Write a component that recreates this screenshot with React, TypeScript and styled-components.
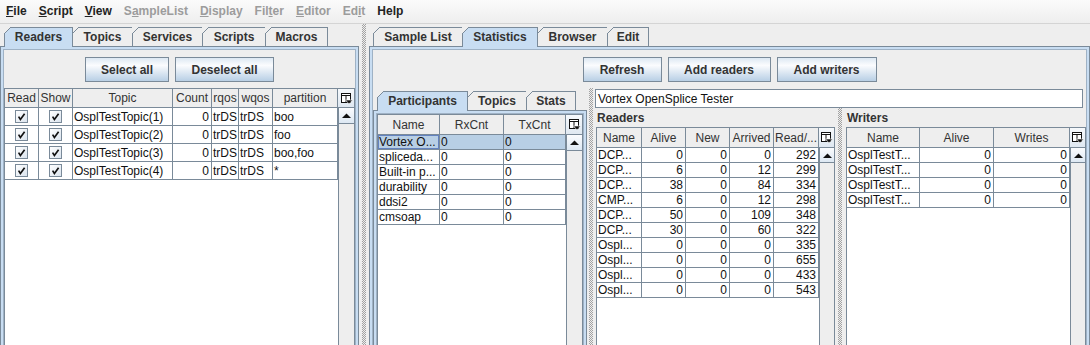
import React from "react";
import styled, { createGlobalStyle } from "styled-components";

const LINE = "#7a8a99";
const TAB_BLUE = "#c8ddf2";
const SELECTION = "#b8cfe5";
const FACE = "#eeeeee";

const GlobalStyle = createGlobalStyle`
  * { box-sizing: border-box; }
  html, body { margin: 0; padding: 0; background: ${FACE}; }
  body {
    font-family: "Liberation Sans", Arial, sans-serif;
    font-size: 12px;
    color: #111;
  }
`;

const Page = styled.div`
  width: 1090px;
  height: 345px;
  overflow: hidden;
  background: ${FACE};
  display: flex;
  flex-direction: column;
`;

/* ---------- menu bar ---------- */

const MenuBar = styled.div`
  flex: none;
  height: 24px;
  display: flex;
  align-items: center;
  padding-bottom: 1px;
  background: linear-gradient(#fbfbfb, #eeeeee);
  border-bottom: 1px solid #d4d4d4;
`;

const MenuItem = styled.span<{ $disabled?: boolean }>`
  padding: 0 6px;
  font-weight: bold;
  font-size: 12px;
  color: ${(p) => (p.$disabled ? "#9c9c9c" : "#222")};
  white-space: nowrap;
`;

/* ---------- split panes ---------- */

const Workspace = styled.div`
  flex: none;
  height: 340px;
  display: flex;
`;

const SplitDivider = styled.div<{ $w: number }>`
  flex: none;
  width: ${(p) => p.$w}px;
  display: flex;
  justify-content: center;
  &::after {
    content: "";
    width: 4px;
    background-image: conic-gradient(#a2a2a2 25%, transparent 0 50%, #a2a2a2 0 75%, transparent 0);
    background-size: 2px 2px;
  }
`;

/* ---------- tabbed panes ---------- */

const TabbedPane = styled.div<{ $w?: number }>`
  display: flex;
  flex-direction: column;
  ${(p) => (p.$w ? `flex: none; width: ${p.$w}px;` : "flex: 1; min-width: 0;")}
`;

const TabStrip = styled.div<{ $top: number }>`
  flex: none;
  display: flex;
  align-items: flex-start;
  height: ${(p) => 19 + p.$top}px;
  padding: ${(p) => p.$top}px 0 0 4px;
`;

const Tab = styled.div<{ $w: number; $selected?: boolean }>`
  position: relative;
  z-index: ${(p) => (p.$selected ? 2 : 1)};
  flex: none;
  width: ${(p) => p.$w}px;
  height: ${(p) => (p.$selected ? 20 : 19)}px;
  margin-right: -1px;
  margin-bottom: ${(p) => (p.$selected ? -1 : 0)}px;
  padding-bottom: ${(p) => (p.$selected ? 1 : 0)}px;
  border: 1px solid ${LINE};
  border-bottom: none;
  background: ${(p) => (p.$selected ? TAB_BLUE : FACE)};
  display: flex;
  align-items: center;
  justify-content: center;
  font-weight: bold;
  font-size: 12px;
  color: #333;
  white-space: nowrap;
  &::before {
    content: "";
    position: absolute;
    left: -1px;
    top: -1px;
    width: 7px;
    height: 7px;
    background: linear-gradient(
      to bottom right,
      ${FACE} 0 calc(50% - 0.6px),
      ${LINE} calc(50% - 0.6px) calc(50% + 0.6px),
      transparent calc(50% + 0.6px)
    );
  }
`;

const TabContent = styled.div`
  flex: 1;
  min-height: 0;
  display: flex;
  flex-direction: column;
  border: 1px solid ${LINE};
  background: ${TAB_BLUE};
  padding: 2px;
`;

const ContentPanel = styled.div`
  flex: 1;
  min-height: 0;
  display: flex;
  flex-direction: column;
  border: 1px solid #9fb2c5;
  background: ${FACE};
`;

/* ---------- buttons ---------- */

const ButtonRow = styled.div`
  flex: none;
  display: flex;
  justify-content: center;
  gap: 6px;
  padding-top: 7px;
`;

const Button = styled.button<{ $w: number }>`
  width: ${(p) => p.$w}px;
  height: 25px;
  padding: 0;
  border: 1px solid ${LINE};
  background: linear-gradient(#dde8f3 0%, #fbfcfe 32%, #b8cfe5 100%);
  font-family: inherit;
  font-weight: bold;
  font-size: 12px;
  color: #333;
`;

/* ---------- tables ---------- */

const ScrollPane = styled.div<{ $top?: number }>`
  flex: 1;
  min-height: 0;
  margin-top: ${(p) => p.$top ?? 0}px;
  display: flex;
  flex-direction: column;
  border: 1px solid ${LINE};
  background: #fff;
  overflow: hidden;
`;

const HeaderRow = styled.div<{ $template: string; $h: number }>`
  flex: none;
  display: grid;
  grid-template-columns: ${(p) => p.$template};
  height: ${(p) => p.$h}px;
  background: ${FACE};
  border-bottom: 1px solid ${LINE};
`;

const HeaderCell = styled.div`
  display: flex;
  align-items: center;
  justify-content: center;
  overflow: hidden;
  white-space: nowrap;
  border-right: 1px solid ${LINE};
  font-size: 12px;
  color: #333;
`;

const ColumnControl = styled.div`
  display: flex;
  align-items: center;
  justify-content: center;
  background: linear-gradient(#f6f9fc, #dfe8f1);
`;

const Viewport = styled.div`
  flex: 1;
  min-height: 0;
  display: flex;
`;

const RowList = styled.div`
  flex: 1;
  min-width: 0;
  display: flex;
  flex-direction: column;
`;

const Row = styled.div<{ $template: string; $h: number; $selected?: boolean }>`
  flex: none;
  display: grid;
  grid-template-columns: ${(p) => p.$template};
  height: ${(p) => p.$h}px;
  background: ${(p) => (p.$selected ? SELECTION : "#fff")};
`;

const Cell = styled.div<{ $align: string; $focused?: boolean }>`
  display: flex;
  align-items: center;
  justify-content: ${(p) =>
    p.$align === "right" ? "flex-end" : p.$align === "center" ? "center" : "flex-start"};
  padding: 0 2px 0 1px;
  overflow: hidden;
  white-space: nowrap;
  border-right: 1px solid ${LINE};
  border-bottom: 1px solid ${LINE};
  font-size: 12px;
  color: #111;
  box-shadow: ${(p) => (p.$focused ? "inset 0 0 0 1px #6382bf" : "none")};
`;

const ScrollBar = styled.div<{ $w: number }>`
  flex: none;
  width: ${(p) => p.$w}px;
  display: flex;
  flex-direction: column;
  border-left: 1px solid ${LINE};
  background: ${FACE};
`;

const ArrowButton = styled.div<{ $h: number }>`
  flex: none;
  height: ${(p) => p.$h}px;
  display: flex;
  align-items: center;
  justify-content: center;
  border-bottom: 1px solid ${LINE};
  background: linear-gradient(#fbfcfe, #dde8f3);
`;

const CheckBoxBox = styled.span`
  width: 13px;
  height: 13px;
  display: flex;
  align-items: center;
  justify-content: center;
  border: 1px solid ${LINE};
  background: linear-gradient(135deg, #ffffff, #dbe4ee);
`;

const CHECK = "\u0000check";

function CheckBox() {
  return (
    <CheckBoxBox>
      <svg width="9" height="9" viewBox="0 0 9 9">
        <path d="M1.6 4.6 L3.4 7.4 L7.6 1.8" fill="none" stroke="#111" strokeWidth="1.7" />
      </svg>
    </CheckBoxBox>
  );
}

function ColumnControlIcon() {
  return (
    <svg width="13" height="13" viewBox="0 0 13 13">
      <rect x="1.5" y="1.5" width="9" height="9" fill="#fff" stroke="#111" />
      <line x1="1.5" y1="3.5" x2="10.5" y2="3.5" stroke="#111" />
      <line x1="6" y1="3.5" x2="6" y2="10.5" stroke="#111" />
      <path d="M5.5 8 H12.5 L9 12 Z" fill="#111" stroke="#fff" strokeWidth="0.6" />
    </svg>
  );
}

type Column = { label: string; width: number; align?: "left" | "right" | "center" };

function DataTable(props: {
  columns: Column[];
  rows: string[][];
  rowHeight: number;
  headerHeight: number;
  scrollWidth: number;
  selectedRow?: number;
  top?: number;
}) {
  const { columns, rows, rowHeight, headerHeight, scrollWidth, selectedRow, top } = props;
  const template = columns
    .map((c, i) => (i === columns.length - 1 ? "minmax(0, 1fr)" : `${c.width}px`))
    .join(" ");
  return (
    <ScrollPane $top={top}>
      <HeaderRow $template={`${template} ${scrollWidth}px`} $h={headerHeight}>
        {columns.map((c) => (
          <HeaderCell key={c.label}>{c.label}</HeaderCell>
        ))}
        <ColumnControl>
          <ColumnControlIcon />
        </ColumnControl>
      </HeaderRow>
      <Viewport>
        <RowList>
          {rows.map((r, i) => (
            <Row key={i} $template={template} $h={rowHeight} $selected={i === selectedRow}>
              {r.map((v, j) => (
                <Cell key={j} $align={columns[j].align ?? "left"} $focused={i === selectedRow && j === 0}>
                  {v === CHECK ? <CheckBox /> : v}
                </Cell>
              ))}
            </Row>
          ))}
        </RowList>
        <ScrollBar $w={scrollWidth}>
          <ArrowButton $h={scrollWidth}>
            <svg width="9" height="5" viewBox="0 0 9 5">
              <path d="M0 5 L4.5 0.5 L9 5 Z" fill="#111" />
            </svg>
          </ArrowButton>
        </ScrollBar>
      </Viewport>
    </ScrollPane>
  );
}

/* ---------- statistics area ---------- */

const SplitRow = styled.div`
  flex: 1;
  min-height: 0;
  margin-top: 6px;
  display: flex;
`;

const StatsRegion = styled.div`
  flex: 1;
  min-width: 0;
  display: flex;
  flex-direction: column;
  padding-top: 1px;
`;

const TextField = styled.div`
  flex: none;
  height: 19px;
  margin-right: 3px;
  display: flex;
  align-items: center;
  padding-left: 2px;
  border: 1px solid ${LINE};
  background: #fff;
  font-size: 12px;
  color: #111;
`;

const TablesRow = styled.div`
  flex: 1;
  min-height: 0;
  display: flex;
`;

const TitledPanel = styled.div<{ $w?: number }>`
  display: flex;
  flex-direction: column;
  padding-left: 1px;
  ${(p) => (p.$w ? `flex: none; width: ${p.$w}px;` : "flex: 1; min-width: 0;")}
`;

const PanelTitle = styled.div`
  flex: none;
  height: 19px;
  display: flex;
  align-items: center;
  padding-left: 1px;
  font-weight: bold;
  font-size: 12px;
  color: #333;
`;

/* ---------- data ---------- */

const topicColumns: Column[] = [
  { label: "Read", width: 34, align: "center" },
  { label: "Show", width: 34, align: "center" },
  { label: "Topic", width: 100 },
  { label: "Count", width: 39, align: "right" },
  { label: "rqos", width: 27 },
  { label: "wqos", width: 34 },
  { label: "partition", width: 66 },
];

const topicRows = [
  [CHECK, CHECK, "OsplTestTopic(1)", "0", "trDS", "trDS", "boo"],
  [CHECK, CHECK, "OsplTestTopic(2)", "0", "trDS", "trDS", "foo"],
  [CHECK, CHECK, "OsplTestTopic(3)", "0", "trDS", "trDS", "boo,foo"],
  [CHECK, CHECK, "OsplTestTopic(4)", "0", "trDS", "trDS", "*"],
];

const participantColumns: Column[] = [
  { label: "Name", width: 62 },
  { label: "RxCnt", width: 64 },
  { label: "TxCnt", width: 63 },
];

const participantRows = ["Vortex O...", "spliceda...", "Built-in p...", "durability", "ddsi2", "cmsoap"].map(
  (n) => [n, "0", "0"]
);

const readerColumns: Column[] = [
  { label: "Name", width: 45 },
  { label: "Alive", width: 44, align: "right" },
  { label: "New", width: 44, align: "right" },
  { label: "Arrived", width: 44, align: "right" },
  { label: "Read/...", width: 44, align: "right" },
];

const readerRows = [
  ["DCP...", "0", "0", "0", "292"],
  ["DCP...", "6", "0", "12", "299"],
  ["DCP...", "38", "0", "84", "334"],
  ["CMP...", "6", "0", "12", "298"],
  ["DCP...", "50", "0", "109", "348"],
  ["DCP...", "30", "0", "60", "322"],
  ["Ospl...", "0", "0", "0", "335"],
  ["Ospl...", "0", "0", "0", "655"],
  ["Ospl...", "0", "0", "0", "433"],
  ["Ospl...", "0", "0", "0", "543"],
];

const writerColumns: Column[] = [
  { label: "Name", width: 73 },
  { label: "Alive", width: 74, align: "right" },
  { label: "Writes", width: 74, align: "right" },
];

const writerRows = [0, 1, 2, 3].map(() => ["OsplTestT...", "0", "0"]);

export default function App() {
  return (
    <>
      <GlobalStyle />
      <Page>
        <MenuBar>
          <MenuItem><u>F</u>ile</MenuItem>
          <MenuItem><u>S</u>cript</MenuItem>
          <MenuItem><u>V</u>iew</MenuItem>
          <MenuItem $disabled>S<u>a</u>mpleList</MenuItem>
          <MenuItem $disabled><u>D</u>isplay</MenuItem>
          <MenuItem $disabled>Fil<u>t</u>er</MenuItem>
          <MenuItem $disabled><u>E</u>ditor</MenuItem>
          <MenuItem $disabled>Ed<u>i</u>t</MenuItem>
          <MenuItem>Help</MenuItem>
        </MenuBar>

        <Workspace>
          <TabbedPane $w={359}>
            <TabStrip $top={3}>
              <Tab $w={69} $selected>Readers</Tab>
              <Tab $w={61}>Topics</Tab>
              <Tab $w={71}>Services</Tab>
              <Tab $w={64}>Scripts</Tab>
              <Tab $w={63}>Macros</Tab>
            </TabStrip>
            <TabContent>
              <ContentPanel>
                <ButtonRow>
                  <Button $w={84}>Select all</Button>
                  <Button $w={99}>Deselect all</Button>
                </ButtonRow>
                <DataTable
                  top={6}
                  columns={topicColumns}
                  rows={topicRows}
                  rowHeight={18}
                  headerHeight={19}
                  scrollWidth={16}
                />
              </ContentPanel>
            </TabContent>
          </TabbedPane>

          <SplitDivider $w={10} />

          <TabbedPane>
            <TabStrip $top={3}>
              <Tab $w={90}>Sample List</Tab>
              <Tab $w={76} $selected>Statistics</Tab>
              <Tab $w={71}>Browser</Tab>
              <Tab $w={42}>Edit</Tab>
            </TabStrip>
            <TabContent>
              <ContentPanel>
                <ButtonRow>
                  <Button $w={79}>Refresh</Button>
                  <Button $w={103}>Add readers</Button>
                  <Button $w={100}>Add writers</Button>
                </ButtonRow>
                <SplitRow>
                  <TabbedPane $w={214}>
                    <TabStrip $top={3}>
                      <Tab $w={91} $selected>Participants</Tab>
                      <Tab $w={60}>Topics</Tab>
                      <Tab $w={50}>Stats</Tab>
                    </TabStrip>
                    <TabContent>
                      <ContentPanel>
                        <DataTable
                          columns={participantColumns}
                          rows={participantRows}
                          rowHeight={15}
                          headerHeight={20}
                          scrollWidth={16}
                          selectedRow={0}
                        />
                      </ContentPanel>
                    </TabContent>
                  </TabbedPane>

                  <SplitDivider $w={8} />

                  <StatsRegion>
                    <TextField>Vortex OpenSplice Tester</TextField>
                    <TablesRow>
                      <TitledPanel $w={240}>
                        <PanelTitle>Readers</PanelTitle>
                        <DataTable
                          columns={readerColumns}
                          rows={readerRows}
                          rowHeight={15}
                          headerHeight={20}
                          scrollWidth={15}
                        />
                      </TitledPanel>
                      <SplitDivider $w={10} />
                      <TitledPanel>
                        <PanelTitle>Writers</PanelTitle>
                        <DataTable
                          columns={writerColumns}
                          rows={writerRows}
                          rowHeight={15}
                          headerHeight={20}
                          scrollWidth={15}
                        />
                      </TitledPanel>
                    </TablesRow>
                  </StatsRegion>
                </SplitRow>
              </ContentPanel>
            </TabContent>
          </TabbedPane>
        </Workspace>
      </Page>
    </>
  );
}
